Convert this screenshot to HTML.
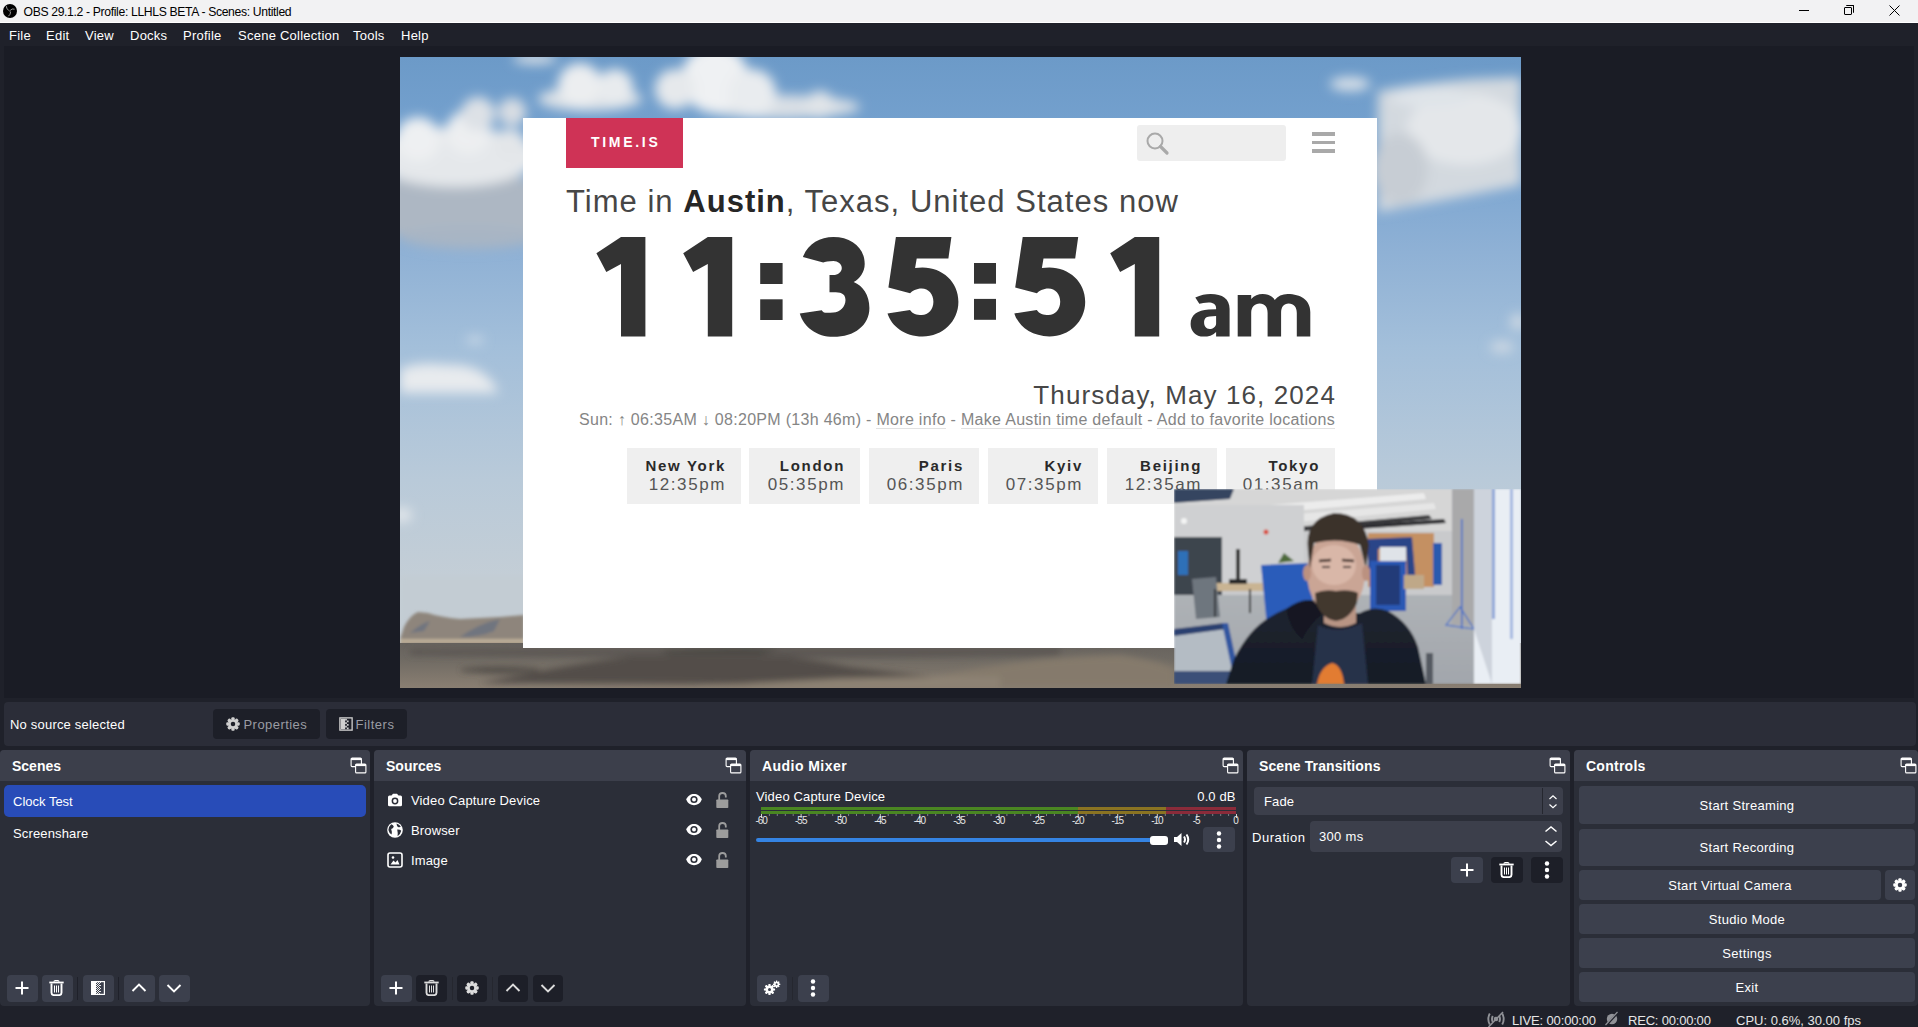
<!DOCTYPE html>
<html><head><meta charset="utf-8">
<style>
*{margin:0;padding:0;box-sizing:border-box}
html,body{width:1918px;height:1027px;overflow:hidden;background:#1f212a;font-family:"Liberation Sans",sans-serif;color:#fff}
.a{position:absolute}
.t{position:absolute;white-space:nowrap;line-height:1}
#title{left:0;top:0;width:1918px;height:23px;background:#f2f2f3;border-bottom:1px solid #fff}
#menu{left:0;top:23px;width:1918px;height:22px;background:#1f212a}
#prevbg{left:4px;top:46px;width:1910px;height:652px;background:#1a1c25}
#preview{left:400px;top:57px;width:1121px;height:631px;overflow:hidden;background:#8fb0d0}
.dock{position:absolute;top:750px;height:256px;background:#2b2e38;border-radius:4px;overflow:hidden}
.dh{position:absolute;left:0;top:0;right:0;height:31px;background:#3c3f4b}
.dh .t{font-weight:bold;font-size:14px;top:9px;left:12px;letter-spacing:0.25px}
.btn{position:absolute;background:#3c404d;border-radius:4px}
.dis{background:#1f212a}
.city{position:absolute;top:330px;height:56px;background:#efefef}
.city b{position:absolute;right:15px;top:10px;font-size:15px;letter-spacing:1.7px;font-weight:bold;color:#2a2a2a;white-space:nowrap;line-height:1}
.city i{position:absolute;right:15px;top:28px;font-size:17px;letter-spacing:1.6px;font-style:normal;color:#555;white-space:nowrap;line-height:1}
</style></head><body>
<div id="title" class="a">
  <svg class="a" style="left:3px;top:4px" width="14" height="14" viewBox="-7 -7 14 14"><circle r="7" fill="#000"/><g fill="none" stroke="#d8d8d8" stroke-width="0.7"><path d="M-3.6,-4.8 Q-3.8,-2 -1.2,-0.6"/><path d="M4.6,-1.8 Q2,-2.8 0.2,-0.6"/><path d="M-1.6,5.2 Q0.6,3.6 0.6,0.8"/></g><circle r="0.9" fill="#555"/></svg>
  <div class="t" style="left:23.5px;top:5.5px;font-size:12.2px;letter-spacing:-0.35px;color:#000">OBS 29.1.2 - Profile: LLHLS BETA - Scenes: Untitled</div>
  <div class="a" style="left:1799px;top:10px;width:10px;height:1px;background:#000"></div>
  <div class="a" style="left:1844px;top:7px;width:8px;height:8px;border:1px solid #000;border-radius:1px"></div>
  <div class="a" style="left:1846px;top:5px;width:8px;height:8px;border-top:1px solid #000;border-right:1px solid #000;border-radius:1px"></div>
  <svg class="a" style="left:1889px;top:5px" width="11" height="11" viewBox="0 0 11 11"><path d="M0.5 0.5L10.5 10.5M10.5 0.5L0.5 10.5" stroke="#000" stroke-width="1"/></svg>
</div>
<div id="menu" class="a">
  <div class="t" style="left:9px;top:6px;font-size:13px;letter-spacing:0.25px">File</div>
  <div class="t" style="left:46px;top:6px;font-size:13px;letter-spacing:0.25px">Edit</div>
  <div class="t" style="left:85px;top:6px;font-size:13px;letter-spacing:0.25px">View</div>
  <div class="t" style="left:130px;top:6px;font-size:13px;letter-spacing:0.25px">Docks</div>
  <div class="t" style="left:183px;top:6px;font-size:13px;letter-spacing:0.25px">Profile</div>
  <div class="t" style="left:238px;top:6px;font-size:13px;letter-spacing:0.25px">Scene Collection</div>
  <div class="t" style="left:353px;top:6px;font-size:13px;letter-spacing:0.25px">Tools</div>
  <div class="t" style="left:401px;top:6px;font-size:13px;letter-spacing:0.25px">Help</div>
</div>
<div id="prevbg" class="a"></div>
<div id="preview" class="a">
  
  <svg class="a" style="left:0;top:0" width="1121" height="631" viewBox="0 0 1121 631">
    <defs>
      <linearGradient id="sky" x1="0" y1="0" x2="0" y2="1">
        <stop offset="0" stop-color="#6c9ac8"/>
        <stop offset="0.15" stop-color="#77a3d0"/>
        <stop offset="0.31" stop-color="#8fb1d5"/>
        <stop offset="0.46" stop-color="#a3bfda"/>
        <stop offset="0.67" stop-color="#b9cad9"/>
        <stop offset="0.83" stop-color="#c4ced6"/>
        <stop offset="1" stop-color="#c6cfd5"/>
      </linearGradient>
      <linearGradient id="grd" x1="0" y1="0" x2="0" y2="1">
        <stop offset="0" stop-color="#7a7268"/>
        <stop offset="0.5" stop-color="#6c655e"/>
        <stop offset="1" stop-color="#5e5954"/>
      </linearGradient>
      <filter id="b6" x="-50%" y="-50%" width="200%" height="200%"><feGaussianBlur stdDeviation="6"/></filter>
      <filter id="b3" x="-50%" y="-50%" width="200%" height="200%"><feGaussianBlur stdDeviation="3"/></filter>
      <filter id="b2" x="-50%" y="-50%" width="200%" height="200%"><feGaussianBlur stdDeviation="1.5"/></filter>
    </defs>
    <rect width="1121" height="631" fill="url(#sky)"/>
    <!-- clouds -->
    <g filter="url(#b6)">
      <ellipse cx="60" cy="150" rx="95" ry="38" fill="#adb7c3"/>
      <ellipse cx="70" cy="180" rx="70" ry="12" fill="#a8b5c4"/>
      <ellipse cx="55" cy="100" rx="82" ry="30" fill="#e5e8eb"/>
      <circle cx="18" cy="82" r="22" fill="#eef0f2"/>
      <circle cx="68" cy="75" r="22" fill="#edeff1"/>
      <circle cx="110" cy="88" r="16" fill="#e3e6e9"/>
      <circle cx="78" cy="57" r="17" fill="#dde1e6"/>
      <circle cx="112" cy="55" r="14" fill="#d8dde3"/>
      <ellipse cx="190" cy="42" rx="52" ry="12" fill="#dde2e7"/>
      <circle cx="180" cy="28" r="22" fill="#eceef0"/>
      <circle cx="215" cy="30" r="18" fill="#e8ebee"/>
      <ellipse cx="380" cy="50" rx="80" ry="12" fill="#d9dfe5"/>
      <circle cx="315" cy="22" r="34" fill="#eff1f3"/>
      <circle cx="275" cy="32" r="20" fill="#e6e9ec"/>
      <circle cx="352" cy="36" r="24" fill="#e9ecef"/>
      <circle cx="420" cy="48" r="14" fill="#e0e4e8"/>
      <ellipse cx="135" cy="2" rx="22" ry="5" fill="#dde2e7"/>
      <path d="M978 34 Q1020 26 1070 22 L1121 20 L1121 128 L1060 140 L978 155 Z" fill="#d3d9df"/>
      <ellipse cx="1065" cy="72" rx="58" ry="36" fill="#e4e7ea"/>
      <ellipse cx="1000" cy="112" rx="28" ry="36" fill="#c7cdd4"/>
      <ellipse cx="1030" cy="40" rx="40" ry="10" fill="#dfe4e9"/>
      <ellipse cx="950" cy="27" rx="20" ry="7" fill="#d8e0e8"/>
      <ellipse cx="1102" cy="290" rx="12" ry="6" fill="#cdd8e3"/>
      <ellipse cx="1118" cy="265" rx="8" ry="8" fill="#cdd8e3"/>
      <path d="M0 336 L0 312 Q20 304 45 308 Q70 306 85 318 Q95 326 98 336 Z" fill="#e8ebee"/><ellipse cx="75" cy="283" rx="9" ry="3" fill="#d8e2ec"/><ellipse cx="2" cy="458" rx="10" ry="7" fill="#e4e8ec"/>
    </g>
    <g filter="url(#b3)">
      <rect x="0" y="520" width="130" height="70" fill="#c3ccd3"/>
    </g>
    <!-- desert -->
    <defs>
      <linearGradient id="gnd" x1="0" y1="0" x2="0" y2="1">
        <stop offset="0" stop-color="#66625d"/>
        <stop offset="0.35" stop-color="#6f6a63"/>
        <stop offset="1" stop-color="#8a7f72"/>
      </linearGradient>
    </defs>
    <g filter="url(#b2)">
      <path d="M0 582 L4 570 Q10 558 18 555 L28 556 Q40 560 60 562 L100 560 L124 558 L124 590 L0 590 Z" fill="#8e857b"/>
      <path d="M10 576 Q22 566 30 564 L24 574 Z M60 580 Q80 566 100 562 L94 574 Q80 580 60 580 Z" fill="#70747f"/>
      <rect x="0" y="582" width="124" height="4.5" fill="#bcae98"/>
    </g>
    <rect x="0" y="586" width="1121" height="45" fill="url(#gnd)"/>
    <g filter="url(#b3)">
      <path d="M80 626 Q200 600 300 592 Q380 596 450 610 Q520 618 600 628 Z" fill="#534e49"/>
      <path d="M10 592 L660 590 L660 598 Q400 602 10 598 Z" fill="#5b5752"/>
      <path d="M260 594 Q320 588 380 592 L360 598 L270 598 Z" fill="#4a4642"/>
      <ellipse cx="100" cy="613" rx="40" ry="3" fill="#4e4944"/>
      <path d="M540 620 Q620 600 720 598 Q760 604 774 612 L774 630 L540 630 Z" fill="#857a6c"/>
      <path d="M300 630 Q450 618 600 620 L600 631 L300 631 Z" fill="#8e8374"/>
    </g>
  </svg>
  <div class="a" style="left:123px;top:61px;width:854px;height:530px;background:#fff"></div>

  <div class="a" style="left:123px;top:61px;width:854px;height:530px;overflow:hidden">
    <div class="a" style="left:43px;top:0;width:117px;height:50px;background:#cf3356"></div>
    <div class="t" id="logo" style="left:68px;top:17px;font-size:14px;font-weight:bold;letter-spacing:2.7px;color:#fff">TIME.IS</div>
    <div class="a" style="left:614px;top:7px;width:149px;height:36px;background:#eeeeee;border-radius:3px"></div>
    <svg class="a" style="left:622px;top:13px" width="26" height="26" viewBox="0 0 26 26"><circle cx="10" cy="10" r="7.5" fill="none" stroke="#a9a9a9" stroke-width="2"/><path d="M15.5 15.5L22 22" stroke="#a9a9a9" stroke-width="3.2" stroke-linecap="round"/></svg>
    <div class="a" style="left:789px;top:14px;width:23px;height:3.5px;background:#a9a9a9"></div>
    <div class="a" style="left:789px;top:22.5px;width:23px;height:3.5px;background:#a9a9a9"></div>
    <div class="a" style="left:789px;top:31px;width:23px;height:3.5px;background:#a9a9a9"></div>
    <div class="t" id="tin" style="left:43px;top:67.5px;font-size:31px;letter-spacing:1.02px;color:#464646">Time in <b style="color:#262626">Austin</b>, Texas, United States now</div>
    <svg class="a" style="left:57px;top:109px" width="750" height="120" viewBox="580 227 750 120"><g fill="#333" fill-rule="evenodd">
      <path d="M596.4,253.2 L621.0,237 L645.4,237 L645.4,336.4 L621.0,336.4 L621.0,264.1 L606.3,272 Z"/><path d="M683.2,253.2 L707.8000000000001,237 L732.2,237 L732.2,336.4 L707.8000000000001,336.4 L707.8000000000001,264.1 L693.1,272 Z"/><path d="M1110.2,253.2 L1134.8,237 L1159.2,237 L1159.2,336.4 L1134.8,336.4 L1134.8,264.1 L1120.1000000000001,272 Z"/>
      <rect x="760.2" y="263" width="22.4" height="21"/><rect x="760.2" y="299.3" width="22.4" height="20.7"/>
      <rect x="974" y="263" width="22" height="20.7"/><rect x="974" y="298.9" width="22" height="20.9"/>
      <path transform="translate(799.8,237)" d="M3.1,20.1 C8,7 20,0 33.6,0 C52,0 64.9,11 64.9,27.1 C64.9,35 60,42 53.9,45.1 C63,49 69.6,58 69.6,70.9 C69.6,88 55,99.8 33.6,99.8 C17,99.8 4,90 0,76.4 L21.9,73.2 C24,77 28,75.6 33.6,75.6 C40,75.6 45.7,70 45.7,63.1 C45.7,56 40,55.3 33.6,55.3 L29.7,55.3 L29.7,38.1 L33.6,38.1 C38,38.1 42,35 42,31 C42,27 38,24 33.6,24 C29,24 25,25 23.4,25.5 Z"/>
      <path transform="translate(887.5,237)" d="M8.4,0 L63.9,0 L60.9,21.4 L29.2,21.4 L27.6,31 Q31,30.5 35,30.5 C55,30.5 70.9,45 70.9,64.7 C70.9,84.5 55,99.4 35.1,99.4 C17,99.4 4,89 0,76.4 L22.5,73 C25,77 29,78 34.2,78 C41,78 45.9,72 45.9,64.7 C45.9,57 41,51.4 34.2,51.4 C29,51.4 24.5,54 22.6,56.2 L0.9,50.6 Z"/>
      <path transform="translate(1014.3,237)" d="M8.4,0 L63.9,0 L60.9,21.4 L29.2,21.4 L27.6,31 Q31,30.5 35,30.5 C55,30.5 70.9,45 70.9,64.7 C70.9,84.5 55,99.4 35.1,99.4 C17,99.4 4,89 0,76.4 L22.5,73 C25,77 29,78 34.2,78 C41,78 45.9,72 45.9,64.7 C45.9,57 41,51.4 34.2,51.4 C29,51.4 24.5,54 22.6,56.2 L0.9,50.6 Z"/>
      <path transform="translate(1190.6,293.9)" d="M4.7,3.6 C10,1 15,0 20,0 C32,0 39,5 39,15 L39,42.7 L25.5,42.7 L25.5,38 C22,41.5 18,42.7 13,42.7 C5,42.7 0,37 0,30 C0,21 7,16 18,15.5 L25.5,15.3 L25.5,14 C25.5,10 22,8.5 18,8.5 C14,8.5 10.5,9.5 8.7,9.8 Z M25.5,22.2 L19,22.5 C15,22.8 13.5,25 13.5,28.5 C13.5,32 15.5,35 19,35 C22,35 25.5,33 25.5,29.5 Z"/>
      <path transform="translate(1237.7,293.9)" d="M0,1 L13.5,1 L13.5,5 C16.5,1.5 20.5,0 25,0 C31,0 35,2.5 37,6 C40,2 44.5,0 50,0 C63,0 72.6,6 72.6,18 L72.6,42.7 L59.1,42.7 L59.1,19 C59.1,13 56,9.5 51,9.5 C46,9.5 43.4,13 43.4,19 L43.4,42.7 L29.9,42.7 L29.9,19 C29.9,13 27,9.5 22,9.5 C17,9.5 13.5,13 13.5,19 L13.5,42.7 L0,42.7 Z"/>
    </g></svg>
    <div class="t" id="date" style="right:41px;top:263.5px;font-size:26px;letter-spacing:1.1px;color:#474747">Thursday, May 16, 2024</div>
    <div class="t" id="sun" style="right:42px;top:294px;font-size:16px;letter-spacing:0.3px;color:#858585">Sun: &#8593; 06:35AM &#8595; 08:20PM (13h 46m) - <span style="border-bottom:1px solid #e2e2e2">More info</span> - <span style="border-bottom:1px solid #e2e2e2">Make Austin time default</span> - <span style="border-bottom:1px solid #e2e2e2">Add to favorite locations</span></div>
    <div class="city" style="left:104px;width:114px"><b>New York</b><i>12:35pm</i></div>
    <div class="city" style="left:226px;width:111px"><b>London</b><i>05:35pm</i></div>
    <div class="city" style="left:346px;width:110px"><b>Paris</b><i>06:35pm</i></div>
    <div class="city" style="left:465px;width:110px"><b>Kyiv</b><i>07:35pm</i></div>
    <div class="city" style="left:584px;width:110px"><b>Beijing</b><i>12:35am</i></div>
    <div class="city" style="left:703px;width:109px"><b>Tokyo</b><i>01:35am</i></div>
  </div>


  <svg class="a" style="left:774px;top:432px" width="347" height="195" viewBox="0 0 347 195">
    <defs>
      <filter id="cb" x="-10%" y="-10%" width="120%" height="120%"><feGaussianBlur stdDeviation="1.2"/></filter>
      <linearGradient id="flr" x1="0" y1="0" x2="0" y2="1"><stop offset="0" stop-color="#aeb2b6"/><stop offset="1" stop-color="#a2a6ac"/></linearGradient>
      <linearGradient id="hood" x1="0" y1="0" x2="0" y2="1"><stop offset="0" stop-color="#1e2430"/><stop offset="1" stop-color="#161b26"/></linearGradient>
    </defs>
    <g filter="url(#cb)">
    <rect width="347" height="195" fill="#c9cacc"/>
    <!-- ceiling -->
    <rect x="0" y="0" width="300" height="42" fill="#d6d6d6"/>
    <path d="M0 0 L60 0 L56 10 L0 14 Z" fill="#344460"/>
    <path d="M20 22 L250 4 L252 10 L30 30 Z" fill="#ececec"/>
    <path d="M60 30 L260 14 L262 20 L70 38 Z" fill="#e6e6e6"/>
    <path d="M100 40 L255 26 L258 30 L110 44 Z" fill="#3a3a3e"/>
    <path d="M180 36 L270 30 L272 34 L185 40 Z" fill="#2e2e32"/>
    <!-- left wall & window -->
    <rect x="0" y="16" width="130" height="80" fill="#cfd0d2"/>
    <rect x="0" y="48" width="48" height="62" fill="#3e454e"/>
    <rect x="4" y="62" width="10" height="24" fill="#2d6fb8"/>
    <circle cx="10" cy="32" r="3" fill="#f4f4f4"/>
    <circle cx="92" cy="43" r="2.5" fill="#d84a3a"/>
    <rect x="62" y="60" width="4" height="36" fill="#2a2a2a"/>
    <!-- floor -->
    <rect x="0" y="106" width="300" height="89" fill="url(#flr)"/>
    <!-- desks & chairs -->
    <rect x="36" y="94" width="60" height="8" fill="#c9b493"/>
    <rect x="55" y="90" width="18" height="5" fill="#2a2a2a"/>
    <path d="M18 90 L42 88 L46 128 L22 130 Z" fill="#6e767e"/>
    <rect x="40" y="100" width="2" height="28" fill="#333"/>
    <rect x="75" y="100" width="2" height="24" fill="#333"/>
    <!-- orange wall & right booth -->
    <rect x="194" y="44" width="66" height="54" fill="#c49062"/>
    <path d="M194 50 L238 48 L242 96 L234 96 L232 58 L204 60 L204 80 L194 80 Z" fill="#2c4488"/>
    <rect x="206" y="58" width="26" height="26" fill="#dfe3e8"/>
    <rect x="196" y="72" width="36" height="50" fill="#2a58b4"/>
    <rect x="202" y="76" width="24" height="40" fill="#223a78"/>
    <rect x="230" y="86" width="20" height="14" fill="#bfa888"/>
    <rect x="259" y="54" width="9" height="42" fill="#2b5aae"/>
    <!-- left booth -->
    <path d="M87 76 L137 74 L140 148 L94 148 Z" fill="#2a5cba"/>
    <path d="M104 74 L110 64 L120 72 Z" fill="#4e6a3a"/>
    <!-- pillar -->
    <rect x="278" y="0" width="24" height="136" fill="#a9a9aa"/>
    <path d="M272 136 L286 118 L300 140 Z" fill="none" stroke="#3d6ac8" stroke-width="1.2"/>
    <rect x="287" y="30" width="1.5" height="110" fill="#3d6ac8"/>
    <!-- right window -->
    <rect x="300" y="0" width="47" height="195" fill="#e9eef4"/>
    <path d="M300 0 L318 0 L318 195 L300 140 Z" fill="#cdd3dc"/>
    <rect x="318" y="0" width="3" height="130" fill="#8ea6d8"/>
    <rect x="336" y="0" width="3" height="150" fill="#a4b8e0"/>
    <!-- front chair left -->
    <path d="M0 142 L50 136 L62 190 L0 195 Z" fill="#b4bcc4"/>
    <path d="M0 140 L50 134 L52 140 L0 147 Z" fill="#2a4070"/>
    <path d="M48 134 L54 134 L66 190 L60 190 Z" fill="#3056a0"/>
    <rect x="0" y="182" width="60" height="13" fill="#3a5078"/>
    <!-- hoodie -->
    <path d="M52 195 L60 170 Q75 140 96 128 Q112 118 126 116 Q140 118 150 124 L186 124 Q200 116 214 122 Q236 134 244 158 L252 195 Z" fill="url(#hood)"/>
    <path d="M112 120 Q128 108 142 112 L150 124 Q138 132 128 150 Q116 140 112 120 Z" fill="#141822"/>
    <path d="M144 136 Q164 146 188 134 L194 195 L138 195 Z" fill="#273048"/>
    <path d="M143 195 Q146 178 158 174 Q168 176 170 195 Z" fill="#e27b32"/>
    <rect x="252" y="164" width="7" height="31" fill="#555a62"/>
    <!-- head -->
    <path d="M150 116 L182 116 L182 134 Q166 142 150 134 Z" fill="#b89484"/>
    <ellipse cx="162" cy="84" rx="29" ry="42" fill="#caa595"/>
    <ellipse cx="160" cy="76" rx="22" ry="20" fill="#d9b7a8"/>
    <path d="M141 104 Q150 100 162 102 Q176 100 184 104 L183 114 Q176 130 162 132 Q148 130 142 114 Z" fill="#43372f"/>
    <path d="M134 62 Q130 30 160 24 Q190 24 195 56 L192 80 L186 56 Q164 48 140 54 L136 80 Z" fill="#3b3029"/>
    <ellipse cx="133" cy="84" rx="4" ry="8" fill="#bb9180"/>
    <ellipse cx="192" cy="84" rx="4" ry="8" fill="#bb9180"/>
    <path d="M145 72 L157 71 M168 71 L180 72" stroke="#3a2a24" stroke-width="2.4"/>
    <path d="M148 78 L156 78 M169 78 L177 78" stroke="#4a3a34" stroke-width="2"/>
    </g>
  </svg>

  <!-- PAGE -->
</div>

<!-- properties bar -->
<div class="a" style="left:4px;top:702px;width:1912px;height:44px;background:#2b2d38;border-radius:4px"></div>
<div class="t" style="left:10px;top:718px;font-size:13px;letter-spacing:0.2px">No source selected</div>
<div class="a" style="left:213px;top:709px;width:107px;height:30px;background:#1d1f28;border-radius:4px"></div>
<div class="t" style="left:243.5px;top:717.5px;font-size:13px;letter-spacing:0.45px;color:#9a9ca3">Properties</div>
<div class="a" style="left:326px;top:709px;width:81px;height:30px;background:#1d1f28;border-radius:4px"></div>
<div class="t" style="left:355.5px;top:717.5px;font-size:13px;letter-spacing:0.5px;color:#9a9ca3">Filters</div>

<!-- docks -->
<div class="dock" style="left:0;width:370px"><div class="dh"><div class="t" style="letter-spacing:0">Scenes</div></div></div>
<div class="dock" style="left:374px;width:372px"><div class="dh"><div class="t" style="letter-spacing:0">Sources</div></div></div>
<div class="dock" style="left:750px;width:493px"><div class="dh"><div class="t" style="letter-spacing:0.45px">Audio Mixer</div></div></div>
<div class="dock" style="left:1247px;width:323px"><div class="dh"><div class="t" style="letter-spacing:0.1px">Scene Transitions</div></div></div>
<div class="dock" style="left:1574px;width:344px"><div class="dh"><div class="t">Controls</div></div></div>

<svg class="a" style="left:350px;top:757px" width="17" height="17" viewBox="0 0 17 17"><rect x="1.1" y="1.1" width="10.3" height="8.5" rx="1" fill="none" stroke="#fff" stroke-width="1.1"/><rect x="1.1" y="1.1" width="10.3" height="2" fill="#fff"/><rect x="5.6" y="7.1" width="10.3" height="8.8" rx="1" fill="#3c3f4b" stroke="#fff" stroke-width="1.1"/><rect x="5.6" y="7.1" width="10.3" height="2" fill="#fff"/></svg>
<svg class="a" style="left:725px;top:757px" width="17" height="17" viewBox="0 0 17 17"><rect x="1.1" y="1.1" width="10.3" height="8.5" rx="1" fill="none" stroke="#fff" stroke-width="1.1"/><rect x="1.1" y="1.1" width="10.3" height="2" fill="#fff"/><rect x="5.6" y="7.1" width="10.3" height="8.8" rx="1" fill="#3c3f4b" stroke="#fff" stroke-width="1.1"/><rect x="5.6" y="7.1" width="10.3" height="2" fill="#fff"/></svg>
<svg class="a" style="left:1222px;top:757px" width="17" height="17" viewBox="0 0 17 17"><rect x="1.1" y="1.1" width="10.3" height="8.5" rx="1" fill="none" stroke="#fff" stroke-width="1.1"/><rect x="1.1" y="1.1" width="10.3" height="2" fill="#fff"/><rect x="5.6" y="7.1" width="10.3" height="8.8" rx="1" fill="#3c3f4b" stroke="#fff" stroke-width="1.1"/><rect x="5.6" y="7.1" width="10.3" height="2" fill="#fff"/></svg>
<svg class="a" style="left:1549px;top:757px" width="17" height="17" viewBox="0 0 17 17"><rect x="1.1" y="1.1" width="10.3" height="8.5" rx="1" fill="none" stroke="#fff" stroke-width="1.1"/><rect x="1.1" y="1.1" width="10.3" height="2" fill="#fff"/><rect x="5.6" y="7.1" width="10.3" height="8.8" rx="1" fill="#3c3f4b" stroke="#fff" stroke-width="1.1"/><rect x="5.6" y="7.1" width="10.3" height="2" fill="#fff"/></svg>
<svg class="a" style="left:1900px;top:757px" width="17" height="17" viewBox="0 0 17 17"><rect x="1.1" y="1.1" width="10.3" height="8.5" rx="1" fill="none" stroke="#fff" stroke-width="1.1"/><rect x="1.1" y="1.1" width="10.3" height="2" fill="#fff"/><rect x="5.6" y="7.1" width="10.3" height="8.8" rx="1" fill="#3c3f4b" stroke="#fff" stroke-width="1.1"/><rect x="5.6" y="7.1" width="10.3" height="2" fill="#fff"/></svg>
<div class="a" style="left:4px;top:785px;width:362px;height:32px;background:#284cb8;border-radius:5px"></div>
<div class="t" style="left:13px;top:794.7px;font-size:13px;">Clock Test</div>
<div class="t" style="left:13px;top:826.5px;font-size:13px;letter-spacing:0.15px">Screenshare</div>
<div class="btn" style="left:7px;top:975px;width:31px;height:27px;background:#3c404d"></div>
<div class="btn" style="left:42px;top:975px;width:31px;height:27px;background:#3c404d"></div>
<div class="btn" style="left:83px;top:975px;width:31px;height:27px;background:#3c404d"></div>
<div class="btn" style="left:124px;top:975px;width:31px;height:27px;background:#3c404d"></div>
<div class="btn" style="left:159px;top:975px;width:31px;height:27px;background:#3c404d"></div>
<div class="a" style="left:77px;top:977px;width:1px;height:23px;background:#1f212a"></div>
<div class="a" style="left:118px;top:977px;width:1px;height:23px;background:#1f212a"></div>
<svg class="a" style="left:14px;top:980px" width="16" height="16" viewBox="0 0 16 16"><path d="M8 1.5V14.5M1.5 8H14.5" stroke="#fff" stroke-width="2"/></svg>
<svg class="a" style="left:49px;top:980px" width="15" height="16" viewBox="0 0 15 16"><path d="M0.3 2.5H14.7" stroke="#fff" stroke-width="1.8"/><path d="M5 1.8Q5 0.6 6.2 0.6H8.8Q10 0.6 10 1.8" stroke="#fff" stroke-width="1.1" fill="none"/><path d="M2.5 3.5V12.8Q2.5 15.1 4.8 15.1H10.2Q12.5 15.1 12.5 12.8V3.5" stroke="#fff" stroke-width="1.9" fill="none"/><path d="M5.5 5.5V12.5M7.5 5.5V12.5M9.5 5.5V12.5" stroke="#fff" stroke-width="1"/></svg>
<svg class="a" style="left:91px;top:981px" width="14" height="14" viewBox="0 0 14 14"><rect x="0.6" y="0.6" width="12.8" height="12.8" fill="none" stroke="#fff" stroke-width="1.2"/><rect x="1" y="1" width="4" height="12" fill="#fff"/><g fill="#fff" opacity="0.9"><rect x="5" y="1" width="1" height="1"/><rect x="5" y="3" width="1" height="1"/><rect x="5" y="5" width="1" height="1"/><rect x="5" y="7" width="1" height="1"/><rect x="5" y="9" width="1" height="1"/><rect x="5" y="11" width="1" height="1"/><rect x="6" y="2" width="1" height="1"/><rect x="6" y="4" width="1" height="1"/><rect x="6" y="6" width="1" height="1"/><rect x="6" y="8" width="1" height="1"/><rect x="6" y="10" width="1" height="1"/><rect x="6" y="12" width="1" height="1"/><rect x="7" y="1" width="1" height="1"/><rect x="7" y="3" width="1" height="1"/><rect x="7" y="5" width="1" height="1"/><rect x="7" y="7" width="1" height="1"/><rect x="7" y="9" width="1" height="1"/><rect x="7" y="11" width="1" height="1"/><rect x="8" y="2" width="1" height="1"/><rect x="8" y="4" width="1" height="1"/><rect x="8" y="6" width="1" height="1"/><rect x="8" y="8" width="1" height="1"/><rect x="8" y="10" width="1" height="1"/><rect x="8" y="12" width="1" height="1"/><rect x="9" y="1" width="1" height="1"/><rect x="9" y="4" width="1" height="1"/><rect x="9" y="7" width="1" height="1"/><rect x="9" y="10" width="1" height="1"/></g></svg>
<svg class="a" style="left:131px;top:980px" width="16" height="16" viewBox="0 0 16 16"><path d="M1.5 11L8 4.5L14.5 11" stroke="#fff" stroke-width="1.9" fill="none"/></svg>
<svg class="a" style="left:166px;top:980px" width="16" height="16" viewBox="0 0 16 16"><path d="M1.5 5L8 11.5L14.5 5" stroke="#fff" stroke-width="1.9" fill="none"/></svg>
<svg class="a" style="left:387px;top:793px" width="16" height="14" viewBox="0 0 16 14"><path d="M1 4Q1 2.5 2.5 2.5H4.5L6 0.8H10L11.5 2.5H13.5Q15 2.5 15 4V12Q15 13.2 13.5 13.2H2.5Q1 13.2 1 12Z" fill="#fff"/><circle cx="8" cy="8" r="3.4" fill="#2b2e38"/><circle cx="8" cy="8" r="1.9" fill="#fff"/></svg>
<svg class="a" style="left:387px;top:822px" width="16" height="16" viewBox="0 0 16 16"><circle cx="8" cy="8" r="7.8" fill="#fff"/><path d="M4.2 2.2Q6.5 3 6.8 4.8Q6 6.6 4.2 7Q5.2 9.5 4.6 12.6Q2 11 1.4 8Q1.6 4.4 4.2 2.2Z M9.5 1.4Q12.4 2.2 13.8 4.6Q12.6 5.8 11 5Q9.6 3.6 9.5 1.4Z M10.2 7.6Q13.2 7.4 14.2 8.8Q13.6 12.2 10.6 14.2Q11 11 10.2 7.6Z" fill="#2b2e38"/></svg>
<svg class="a" style="left:387px;top:852px" width="16" height="16" viewBox="0 0 16 16"><rect x="1" y="1" width="14" height="14" rx="2" fill="none" stroke="#fff" stroke-width="1.6"/><path d="M3.5 12.5L6.5 8.5L8.5 10.5L10.5 8L12.5 12.5Z" fill="#fff"/><circle cx="6" cy="5.5" r="1.3" fill="#fff"/></svg>
<div class="t" style="left:411px;top:794px;font-size:13px;letter-spacing:0.15px">Video Capture Device</div>
<div class="t" style="left:411px;top:823.8px;font-size:13px;letter-spacing:0.15px">Browser</div>
<div class="t" style="left:411px;top:854px;font-size:13px;letter-spacing:0.15px">Image</div>
<svg class="a" style="left:686px;top:793px" width="16" height="13" viewBox="0 0 16 13"><path d="M0.3 6.5C2.5 -1 13.5 -1 15.7 6.5C13.5 14 2.5 14 0.3 6.5Z" fill="#fff"/><circle cx="8" cy="6.5" r="3.6" fill="#2b2e38"/><circle cx="8" cy="6.5" r="2" fill="#fff"/></svg>
<svg class="a" style="left:716px;top:792px" width="13" height="16" viewBox="0 0 13 16"><path d="M3.2 8V4Q3.2 1 6.5 1Q9.8 1 9.8 4V5.5" stroke="#9d9d9d" stroke-width="1.8" fill="none"/><rect x="0.3" y="7.5" width="12" height="8.5" rx="0.8" fill="#9d9d9d"/></svg>
<svg class="a" style="left:686px;top:823px" width="16" height="13" viewBox="0 0 16 13"><path d="M0.3 6.5C2.5 -1 13.5 -1 15.7 6.5C13.5 14 2.5 14 0.3 6.5Z" fill="#fff"/><circle cx="8" cy="6.5" r="3.6" fill="#2b2e38"/><circle cx="8" cy="6.5" r="2" fill="#fff"/></svg>
<svg class="a" style="left:716px;top:822px" width="13" height="16" viewBox="0 0 13 16"><path d="M3.2 8V4Q3.2 1 6.5 1Q9.8 1 9.8 4V5.5" stroke="#9d9d9d" stroke-width="1.8" fill="none"/><rect x="0.3" y="7.5" width="12" height="8.5" rx="0.8" fill="#9d9d9d"/></svg>
<svg class="a" style="left:686px;top:853px" width="16" height="13" viewBox="0 0 16 13"><path d="M0.3 6.5C2.5 -1 13.5 -1 15.7 6.5C13.5 14 2.5 14 0.3 6.5Z" fill="#fff"/><circle cx="8" cy="6.5" r="3.6" fill="#2b2e38"/><circle cx="8" cy="6.5" r="2" fill="#fff"/></svg>
<svg class="a" style="left:716px;top:852px" width="13" height="16" viewBox="0 0 13 16"><path d="M3.2 8V4Q3.2 1 6.5 1Q9.8 1 9.8 4V5.5" stroke="#9d9d9d" stroke-width="1.8" fill="none"/><rect x="0.3" y="7.5" width="12" height="8.5" rx="0.8" fill="#9d9d9d"/></svg>
<div class="btn" style="left:381px;top:975px;width:31px;height:27px;background:#3c404d"></div>
<svg class="a" style="left:388px;top:980px" width="16" height="16" viewBox="0 0 16 16"><path d="M8 1.5V14.5M1.5 8H14.5" stroke="#fff" stroke-width="2"/></svg>
<div class="btn" style="left:416px;top:975px;width:31px;height:27px;background:#1d1f28"></div>
<div class="btn" style="left:457px;top:975px;width:30px;height:27px;background:#1d1f28"></div>
<div class="btn" style="left:498px;top:975px;width:30px;height:27px;background:#1d1f28"></div>
<div class="btn" style="left:533px;top:975px;width:30px;height:27px;background:#1d1f28"></div>
<div class="a" style="left:452px;top:977px;width:1px;height:23px;background:#25272f"></div>
<div class="a" style="left:492px;top:977px;width:1px;height:23px;background:#25272f"></div>
<svg class="a" style="left:424px;top:980px" width="15" height="16" viewBox="0 0 15 16"><path d="M0.3 2.5H14.7" stroke="#dcdcdc" stroke-width="1.8"/><path d="M5 1.8Q5 0.6 6.2 0.6H8.8Q10 0.6 10 1.8" stroke="#dcdcdc" stroke-width="1.1" fill="none"/><path d="M2.5 3.5V12.8Q2.5 15.1 4.8 15.1H10.2Q12.5 15.1 12.5 12.8V3.5" stroke="#dcdcdc" stroke-width="1.9" fill="none"/><path d="M5.5 5.5V12.5M7.5 5.5V12.5M9.5 5.5V12.5" stroke="#dcdcdc" stroke-width="1"/></svg>
<svg class="a" style="left:465px;top:981px" width="14" height="14" viewBox="-8 -8 16 16"><g fill="#dcdcdc"><circle r="5.2"/><rect x="-1.9" y="-7.7" width="3.8" height="4" rx="1.2" transform="rotate(0)"/><rect x="-1.9" y="-7.7" width="3.8" height="4" rx="1.2" transform="rotate(45)"/><rect x="-1.9" y="-7.7" width="3.8" height="4" rx="1.2" transform="rotate(90)"/><rect x="-1.9" y="-7.7" width="3.8" height="4" rx="1.2" transform="rotate(135)"/><rect x="-1.9" y="-7.7" width="3.8" height="4" rx="1.2" transform="rotate(180)"/><rect x="-1.9" y="-7.7" width="3.8" height="4" rx="1.2" transform="rotate(225)"/><rect x="-1.9" y="-7.7" width="3.8" height="4" rx="1.2" transform="rotate(270)"/><rect x="-1.9" y="-7.7" width="3.8" height="4" rx="1.2" transform="rotate(315)"/></g><circle r="2.6" fill="#1f212a"/></svg>
<svg class="a" style="left:505px;top:980px" width="16" height="16" viewBox="0 0 16 16"><path d="M1.5 11L8 4.5L14.5 11" stroke="#dcdcdc" stroke-width="1.9" fill="none"/></svg>
<svg class="a" style="left:540px;top:980px" width="16" height="16" viewBox="0 0 16 16"><path d="M1.5 5L8 11.5L14.5 5" stroke="#dcdcdc" stroke-width="1.9" fill="none"/></svg>
<div class="t" style="left:756px;top:790px;font-size:13px;letter-spacing:0.15px">Video Capture Device</div>
<div class="t" style="right:682.5px;top:790px;font-size:13px;letter-spacing:0.1px">0.0 dB</div>
<div class="a" style="left:761px;top:807px;width:317px;height:3px;background:#4a8622"></div>
<div class="a" style="left:761px;top:811px;width:317px;height:3px;background:#4a8622"></div>
<div class="a" style="left:1078px;top:807px;width:88px;height:3px;background:#8a7322"></div>
<div class="a" style="left:1078px;top:811px;width:88px;height:3px;background:#8a7322"></div>
<div class="a" style="left:1166px;top:807px;width:70px;height:3px;background:#8a2b3a"></div>
<div class="a" style="left:1166px;top:811px;width:70px;height:3px;background:#8a2b3a"></div>
<svg class="a" style="left:761px;top:814px" width="477" height="5"><rect x="0.0" y="0" width="1" height="4" fill="#cfcfcf"/><rect x="7.9" y="0" width="1" height="2" fill="#7d7f86"/><rect x="15.8" y="0" width="1" height="2" fill="#7d7f86"/><rect x="23.8" y="0" width="1" height="2" fill="#7d7f86"/><rect x="31.7" y="0" width="1" height="2" fill="#7d7f86"/><rect x="39.6" y="0" width="1" height="4" fill="#cfcfcf"/><rect x="47.5" y="0" width="1" height="2" fill="#7d7f86"/><rect x="55.4" y="0" width="1" height="2" fill="#7d7f86"/><rect x="63.3" y="0" width="1" height="2" fill="#7d7f86"/><rect x="71.2" y="0" width="1" height="2" fill="#7d7f86"/><rect x="79.2" y="0" width="1" height="4" fill="#cfcfcf"/><rect x="87.1" y="0" width="1" height="2" fill="#7d7f86"/><rect x="95.0" y="0" width="1" height="2" fill="#7d7f86"/><rect x="102.9" y="0" width="1" height="2" fill="#7d7f86"/><rect x="110.8" y="0" width="1" height="2" fill="#7d7f86"/><rect x="118.8" y="0" width="1" height="4" fill="#cfcfcf"/><rect x="126.7" y="0" width="1" height="2" fill="#7d7f86"/><rect x="134.6" y="0" width="1" height="2" fill="#7d7f86"/><rect x="142.5" y="0" width="1" height="2" fill="#7d7f86"/><rect x="150.4" y="0" width="1" height="2" fill="#7d7f86"/><rect x="158.3" y="0" width="1" height="4" fill="#cfcfcf"/><rect x="166.2" y="0" width="1" height="2" fill="#7d7f86"/><rect x="174.2" y="0" width="1" height="2" fill="#7d7f86"/><rect x="182.1" y="0" width="1" height="2" fill="#7d7f86"/><rect x="190.0" y="0" width="1" height="2" fill="#7d7f86"/><rect x="197.9" y="0" width="1" height="4" fill="#cfcfcf"/><rect x="205.8" y="0" width="1" height="2" fill="#7d7f86"/><rect x="213.8" y="0" width="1" height="2" fill="#7d7f86"/><rect x="221.7" y="0" width="1" height="2" fill="#7d7f86"/><rect x="229.6" y="0" width="1" height="2" fill="#7d7f86"/><rect x="237.5" y="0" width="1" height="4" fill="#cfcfcf"/><rect x="245.4" y="0" width="1" height="2" fill="#7d7f86"/><rect x="253.3" y="0" width="1" height="2" fill="#7d7f86"/><rect x="261.2" y="0" width="1" height="2" fill="#7d7f86"/><rect x="269.2" y="0" width="1" height="2" fill="#7d7f86"/><rect x="277.1" y="0" width="1" height="4" fill="#cfcfcf"/><rect x="285.0" y="0" width="1" height="2" fill="#7d7f86"/><rect x="292.9" y="0" width="1" height="2" fill="#7d7f86"/><rect x="300.8" y="0" width="1" height="2" fill="#7d7f86"/><rect x="308.8" y="0" width="1" height="2" fill="#7d7f86"/><rect x="316.7" y="0" width="1" height="4" fill="#cfcfcf"/><rect x="324.6" y="0" width="1" height="2" fill="#7d7f86"/><rect x="332.5" y="0" width="1" height="2" fill="#7d7f86"/><rect x="340.4" y="0" width="1" height="2" fill="#7d7f86"/><rect x="348.3" y="0" width="1" height="2" fill="#7d7f86"/><rect x="356.2" y="0" width="1" height="4" fill="#cfcfcf"/><rect x="364.2" y="0" width="1" height="2" fill="#7d7f86"/><rect x="372.1" y="0" width="1" height="2" fill="#7d7f86"/><rect x="380.0" y="0" width="1" height="2" fill="#7d7f86"/><rect x="387.9" y="0" width="1" height="2" fill="#7d7f86"/><rect x="395.8" y="0" width="1" height="4" fill="#cfcfcf"/><rect x="403.8" y="0" width="1" height="2" fill="#7d7f86"/><rect x="411.7" y="0" width="1" height="2" fill="#7d7f86"/><rect x="419.6" y="0" width="1" height="2" fill="#7d7f86"/><rect x="427.5" y="0" width="1" height="2" fill="#7d7f86"/><rect x="435.4" y="0" width="1" height="4" fill="#cfcfcf"/><rect x="443.3" y="0" width="1" height="2" fill="#7d7f86"/><rect x="451.2" y="0" width="1" height="2" fill="#7d7f86"/><rect x="459.2" y="0" width="1" height="2" fill="#7d7f86"/><rect x="467.1" y="0" width="1" height="2" fill="#7d7f86"/><rect x="475.0" y="0" width="1" height="4" fill="#cfcfcf"/></svg>
<div class="t" style="left:760.0px;top:816px;font-size:10px;letter-spacing:-1px;color:#e6e6e6;transform:translateX(-40%)">-60</div>
<div class="t" style="left:799.6px;top:816px;font-size:10px;letter-spacing:-1px;color:#e6e6e6;transform:translateX(-40%)">-55</div>
<div class="t" style="left:839.2px;top:816px;font-size:10px;letter-spacing:-1px;color:#e6e6e6;transform:translateX(-40%)">-50</div>
<div class="t" style="left:878.8px;top:816px;font-size:10px;letter-spacing:-1px;color:#e6e6e6;transform:translateX(-40%)">-45</div>
<div class="t" style="left:918.3px;top:816px;font-size:10px;letter-spacing:-1px;color:#e6e6e6;transform:translateX(-40%)">-40</div>
<div class="t" style="left:957.9px;top:816px;font-size:10px;letter-spacing:-1px;color:#e6e6e6;transform:translateX(-40%)">-35</div>
<div class="t" style="left:997.5px;top:816px;font-size:10px;letter-spacing:-1px;color:#e6e6e6;transform:translateX(-40%)">-30</div>
<div class="t" style="left:1037.1px;top:816px;font-size:10px;letter-spacing:-1px;color:#e6e6e6;transform:translateX(-40%)">-25</div>
<div class="t" style="left:1076.7px;top:816px;font-size:10px;letter-spacing:-1px;color:#e6e6e6;transform:translateX(-40%)">-20</div>
<div class="t" style="left:1116.2px;top:816px;font-size:10px;letter-spacing:-1px;color:#e6e6e6;transform:translateX(-40%)">-15</div>
<div class="t" style="left:1155.8px;top:816px;font-size:10px;letter-spacing:-1px;color:#e6e6e6;transform:translateX(-40%)">-10</div>
<div class="t" style="left:1195.4px;top:816px;font-size:10px;letter-spacing:-1px;color:#e6e6e6;transform:translateX(-40%)">-5</div>
<div class="t" style="left:1235.0px;top:816px;font-size:10px;letter-spacing:-1px;color:#e6e6e6;transform:translateX(-40%)">0</div>
<div class="a" style="left:756px;top:838px;width:400px;height:4px;background:#3584e4;border-radius:2px"></div>
<div class="a" style="left:1150px;top:835.5px;width:18px;height:9px;background:#fff;border-radius:3px"></div>
<svg class="a" style="left:1173px;top:832px" width="18" height="15" viewBox="0 0 18 15"><path d="M1 5H4L8.5 1V14L4 10H1Z" fill="#fff"/><path d="M11 4.5Q13 7.5 11 10.5M13.5 2.5Q17 7.5 13.5 12.5" stroke="#fff" stroke-width="2" fill="none"/></svg>
<div class="btn" style="left:1203px;top:827px;width:32px;height:25px;background:#3c404d"></div>
<svg class="a" style="left:1216px;top:831px" width="6" height="18" viewBox="0 0 6 18"><circle cx="3" cy="2.5" r="2.2" fill="#fff"/><circle cx="3" cy="9" r="2.2" fill="#fff"/><circle cx="3" cy="15.5" r="2.2" fill="#fff"/></svg>
<div class="btn" style="left:757px;top:975px;width:30px;height:27px;background:#3c404d"></div>
<div class="btn" style="left:798px;top:975px;width:31px;height:27px;background:#3c404d"></div>
<div class="a" style="left:792px;top:977px;width:1px;height:23px;background:#25272f"></div>
<svg class="a" style="left:762px;top:979px" width="20" height="18" viewBox="0 0 20 18"><g transform="translate(7.5,10.5)"><g fill="#fff"><circle r="4.0"/><rect x="-1.1" y="-5.6" width="2.2" height="2.6" rx="0.5" transform="rotate(0.0)"/><rect x="-1.1" y="-5.6" width="2.2" height="2.6" rx="0.5" transform="rotate(45.0)"/><rect x="-1.1" y="-5.6" width="2.2" height="2.6" rx="0.5" transform="rotate(90.0)"/><rect x="-1.1" y="-5.6" width="2.2" height="2.6" rx="0.5" transform="rotate(135.0)"/><rect x="-1.1" y="-5.6" width="2.2" height="2.6" rx="0.5" transform="rotate(180.0)"/><rect x="-1.1" y="-5.6" width="2.2" height="2.6" rx="0.5" transform="rotate(225.0)"/><rect x="-1.1" y="-5.6" width="2.2" height="2.6" rx="0.5" transform="rotate(270.0)"/><rect x="-1.1" y="-5.6" width="2.2" height="2.6" rx="0.5" transform="rotate(315.0)"/></g><circle r="1.5" fill="#3c404d"/></g><g transform="translate(14.6,5.3)"><g fill="#fff"><circle r="2.6"/><rect x="-0.75" y="-3.7" width="1.5" height="1.8" rx="0.5" transform="rotate(0.0)"/><rect x="-0.75" y="-3.7" width="1.5" height="1.8" rx="0.5" transform="rotate(45.0)"/><rect x="-0.75" y="-3.7" width="1.5" height="1.8" rx="0.5" transform="rotate(90.0)"/><rect x="-0.75" y="-3.7" width="1.5" height="1.8" rx="0.5" transform="rotate(135.0)"/><rect x="-0.75" y="-3.7" width="1.5" height="1.8" rx="0.5" transform="rotate(180.0)"/><rect x="-0.75" y="-3.7" width="1.5" height="1.8" rx="0.5" transform="rotate(225.0)"/><rect x="-0.75" y="-3.7" width="1.5" height="1.8" rx="0.5" transform="rotate(270.0)"/><rect x="-0.75" y="-3.7" width="1.5" height="1.8" rx="0.5" transform="rotate(315.0)"/></g><circle r="1.0" fill="#3c404d"/></g></svg>
<svg class="a" style="left:810px;top:979px" width="6" height="18" viewBox="0 0 6 18"><circle cx="3" cy="2.5" r="2.2" fill="#fff"/><circle cx="3" cy="9" r="2.2" fill="#fff"/><circle cx="3" cy="15.5" r="2.2" fill="#fff"/></svg>
<div class="a" style="left:1254px;top:787px;width:309px;height:28px;background:#3c3f4b;border-radius:4px"></div>
<div class="a" style="left:1542px;top:788px;width:1px;height:26px;background:#25272f"></div>
<div class="t" style="left:1264px;top:795px;font-size:13px;letter-spacing:0.15px">Fade</div>
<svg class="a" style="left:1548px;top:794px" width="10" height="16" viewBox="0 0 10 16"><path d="M1.5 5L5 1.8L8.5 5M1.5 10.5L5 13.7L8.5 10.5" stroke="#fff" stroke-width="1.2" fill="none"/></svg>
<div class="t" style="left:1252px;top:830.8px;font-size:13px;letter-spacing:0.55px">Duration</div>
<div class="a" style="left:1310px;top:821px;width:252px;height:31px;background:#3c3f4b;border-radius:4px"></div>
<div class="t" style="left:1319px;top:830px;font-size:13px;letter-spacing:0.3px">300 ms</div>
<svg class="a" style="left:1544px;top:825px" width="14" height="24" viewBox="0 0 14 24"><path d="M1.5 6.5L7 2L12.5 6.5M1.5 16L7 20.5L12.5 16" stroke="#fff" stroke-width="1.5" fill="none"/></svg>
<div class="btn" style="left:1451px;top:857px;width:32px;height:26px;background:#3c404d"></div>
<svg class="a" style="left:1459px;top:862px" width="16" height="16" viewBox="0 0 16 16"><path d="M8 1.5V14.5M1.5 8H14.5" stroke="#fff" stroke-width="2"/></svg>
<div class="btn" style="left:1491px;top:857px;width:32px;height:26px;background:#1d1f28"></div>
<svg class="a" style="left:1499px;top:862px" width="15" height="16" viewBox="0 0 15 16"><path d="M0.3 2.5H14.7" stroke="#fff" stroke-width="1.8"/><path d="M5 1.8Q5 0.6 6.2 0.6H8.8Q10 0.6 10 1.8" stroke="#fff" stroke-width="1.1" fill="none"/><path d="M2.5 3.5V12.8Q2.5 15.1 4.8 15.1H10.2Q12.5 15.1 12.5 12.8V3.5" stroke="#fff" stroke-width="1.9" fill="none"/><path d="M5.5 5.5V12.5M7.5 5.5V12.5M9.5 5.5V12.5" stroke="#fff" stroke-width="1"/></svg>
<div class="btn" style="left:1531px;top:857px;width:32px;height:26px;background:#1d1f28"></div>
<svg class="a" style="left:1544px;top:861px" width="6" height="18" viewBox="0 0 6 18"><circle cx="3" cy="2.5" r="2.2" fill="#fff"/><circle cx="3" cy="9" r="2.2" fill="#fff"/><circle cx="3" cy="15.5" r="2.2" fill="#fff"/></svg>
<div class="btn" style="left:1579px;top:786px;width:336px;height:38px;background:#3c404d"></div>
<div class="t" style="left:1579px;width:336px;text-align:center;top:798.5px;font-size:13px;letter-spacing:0.3px">Start Streaming</div>
<div class="btn" style="left:1579px;top:829px;width:336px;height:37px;background:#3c404d"></div>
<div class="t" style="left:1579px;width:336px;text-align:center;top:841.0px;font-size:13px;letter-spacing:0.3px">Start Recording</div>
<div class="btn" style="left:1579px;top:904px;width:336px;height:30px;background:#3c404d"></div>
<div class="t" style="left:1579px;width:336px;text-align:center;top:912.5px;font-size:13px;letter-spacing:0.3px">Studio Mode</div>
<div class="btn" style="left:1579px;top:938px;width:336px;height:30px;background:#3c404d"></div>
<div class="t" style="left:1579px;width:336px;text-align:center;top:946.5px;font-size:13px;letter-spacing:0.3px">Settings</div>
<div class="btn" style="left:1579px;top:972px;width:336px;height:30px;background:#3c404d"></div>
<div class="t" style="left:1579px;width:336px;text-align:center;top:980.5px;font-size:13px;letter-spacing:0.3px">Exit</div>
<div class="btn" style="left:1579px;top:870px;width:302px;height:30px;background:#3c404d"></div>
<div class="t" style="left:1579px;width:302px;text-align:center;top:878.5px;font-size:13px;letter-spacing:0.3px">Start Virtual Camera</div>
<div class="btn" style="left:1885px;top:870px;width:30px;height:30px;background:#3c404d"></div>
<svg class="a" style="left:1893px;top:878px" width="14" height="14" viewBox="-8 -8 16 16"><g fill="#fff"><circle r="5.2"/><rect x="-1.9" y="-7.7" width="3.8" height="4" rx="1.2" transform="rotate(0)"/><rect x="-1.9" y="-7.7" width="3.8" height="4" rx="1.2" transform="rotate(45)"/><rect x="-1.9" y="-7.7" width="3.8" height="4" rx="1.2" transform="rotate(90)"/><rect x="-1.9" y="-7.7" width="3.8" height="4" rx="1.2" transform="rotate(135)"/><rect x="-1.9" y="-7.7" width="3.8" height="4" rx="1.2" transform="rotate(180)"/><rect x="-1.9" y="-7.7" width="3.8" height="4" rx="1.2" transform="rotate(225)"/><rect x="-1.9" y="-7.7" width="3.8" height="4" rx="1.2" transform="rotate(270)"/><rect x="-1.9" y="-7.7" width="3.8" height="4" rx="1.2" transform="rotate(315)"/></g><circle r="2.6" fill="#3c404d"/></svg>
<svg class="a" style="left:1486px;top:1011px" width="20" height="16" viewBox="0 0 20 16"><g stroke="#909297" stroke-width="1.9" fill="none"><path d="M3.8 2.5Q0.8 8 3.8 13.5M16.2 2.5Q19.2 8 16.2 13.5M6.8 5Q5.2 8 6.8 11M13.2 5Q14.8 8 13.2 11"/></g><circle cx="10" cy="8" r="2.3" fill="#909297"/><path d="M2.5 16L17 1" stroke="#909297" stroke-width="1.5"/></svg>
<svg class="a" style="left:1605px;top:1011px" width="14" height="15" viewBox="0 0 14 15"><circle cx="7" cy="8" r="5.2" fill="#909297"/><path d="M1 14.5L13 1.5" stroke="#1f212a" stroke-width="2.2"/><path d="M0.5 14L12.5 1" stroke="#909297" stroke-width="1.2"/></svg>
<div class="t" style="left:1512px;top:1014px;font-size:13px;letter-spacing:-0.15px;color:#e6e6e6">LIVE: 00:00:00</div>
<div class="t" style="left:1628px;top:1014px;font-size:13px;letter-spacing:-0.2px;color:#e6e6e6">REC: 00:00:00</div>
<div class="t" style="left:1736px;top:1014px;font-size:13px;color:#e6e6e6">CPU: 0.6%, 30.00 fps</div>
<svg class="a" style="left:226px;top:717px" width="14" height="14" viewBox="-8 -8 16 16"><g fill="#d0d0d0"><circle r="5.2"/><rect x="-1.9" y="-7.7" width="3.8" height="4" rx="1.2" transform="rotate(0)"/><rect x="-1.9" y="-7.7" width="3.8" height="4" rx="1.2" transform="rotate(45)"/><rect x="-1.9" y="-7.7" width="3.8" height="4" rx="1.2" transform="rotate(90)"/><rect x="-1.9" y="-7.7" width="3.8" height="4" rx="1.2" transform="rotate(135)"/><rect x="-1.9" y="-7.7" width="3.8" height="4" rx="1.2" transform="rotate(180)"/><rect x="-1.9" y="-7.7" width="3.8" height="4" rx="1.2" transform="rotate(225)"/><rect x="-1.9" y="-7.7" width="3.8" height="4" rx="1.2" transform="rotate(270)"/><rect x="-1.9" y="-7.7" width="3.8" height="4" rx="1.2" transform="rotate(315)"/></g><circle r="2.6" fill="#1f212a"/></svg>
<svg class="a" style="left:339px;top:717px" width="14" height="14" viewBox="0 0 16 16"><rect x="1" y="1" width="14" height="14" fill="none" stroke="#d0d0d0" stroke-width="1.5"/><rect x="2" y="2" width="5" height="12" fill="#d0d0d0"/><g fill="#d0d0d0"><rect x="7" y="2" width="2" height="2"/><rect x="9" y="4" width="2" height="2"/><rect x="7" y="6" width="2" height="2"/><rect x="9" y="8" width="2" height="2"/><rect x="7" y="10" width="2" height="2"/><rect x="9" y="12" width="2" height="2"/></g></svg>
</body></html>
